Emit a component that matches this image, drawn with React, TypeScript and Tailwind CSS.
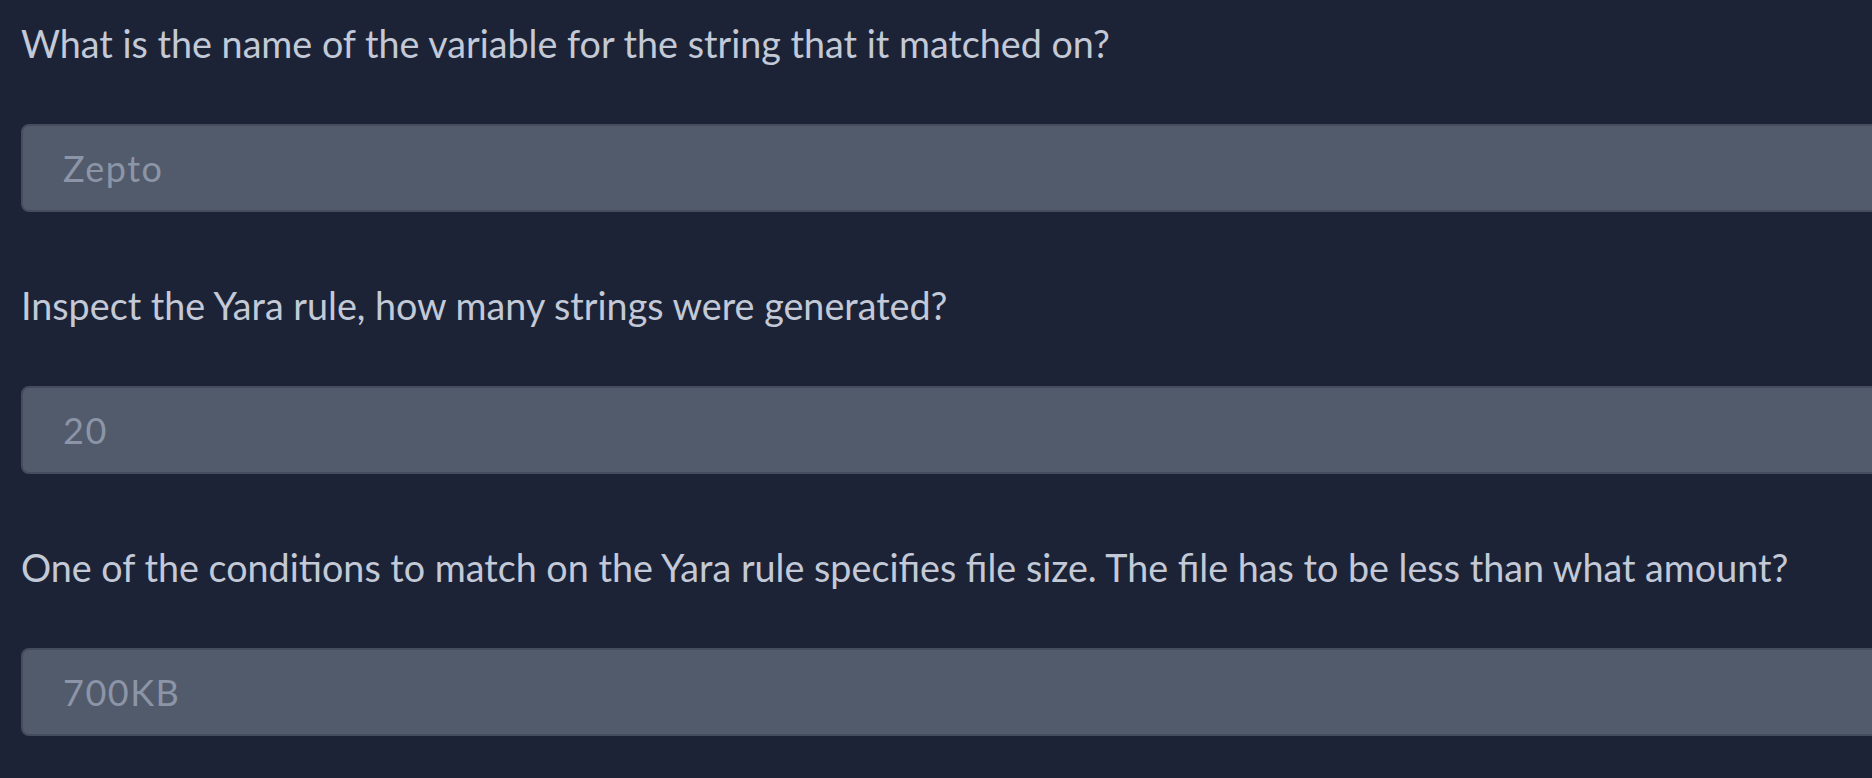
const items = [
  { q: "What is the name of the variable for the string that it matched on?", a: "Zepto" },
  { q: "Inspect the Yara rule, how many strings were generated?", a: "20" },
  {
    q: "One of the conditions to match on the Yara rule specifies file size. The file has to be less than what amount?",
    a: "700KB",
  },
];

export default function App() {
  return (
    <div className="w-full h-[778px] overflow-hidden bg-[#1c2336] font-['Lato',sans-serif]">
      <div className="flex flex-col pl-[21px] pt-4">
        {items.map((it) => (
          <div key={it.a} className="flex flex-col mb-[66px]">
            <div className="text-[37.7px] leading-[56px] text-[#c3c9d6] whitespace-nowrap">{it.q}</div>
            <div className="mt-[52px] w-[2000px] h-[88px] rounded-lg border-2 border-[#444c5d] bg-[#525b6b] flex items-center pl-[40px]">
              <span className="text-[36px] text-[#8c95a7] tracking-[1.5px]">{it.a}</span>
            </div>
          </div>
        ))}
      </div>
    </div>
  );
}
